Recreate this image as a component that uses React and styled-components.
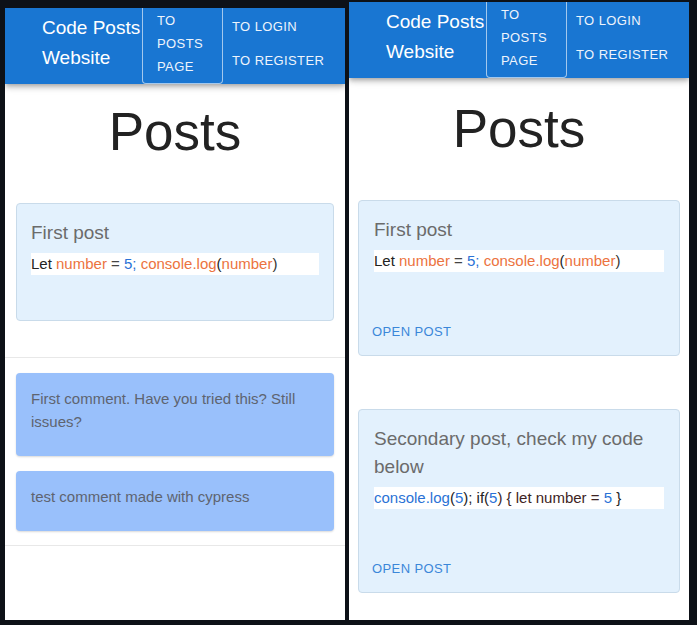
import React from 'react';
import styled, { createGlobalStyle } from 'styled-components';

const GlobalStyle = createGlobalStyle`
  html, body {
    margin: 0;
    padding: 0;
    background-color: #0d1117;
    overflow: hidden;
  }
  body {
    font-family: "Liberation Sans", Arial, sans-serif;
  }
`;

function CodeLine({ parts }) {
  return (
    <Code>
      {parts.map(([text, color], i) => (
        <Token key={i} $color={color}>{text}</Token>
      ))}
    </Code>
  );
}

function Header() {
  return (
    <Bar>
      <Title>Code Posts Website</Title>
      <OutlinedLink>TO POSTS PAGE</OutlinedLink>
      <Links>
        <NavLink>TO LOGIN</NavLink>
        <NavLink>TO REGISTER</NavLink>
      </Links>
    </Bar>
  );
}

const ORANGE = '#ec7340';
const BLUE = '#2a72d6';
const DARK = '#222';
const MAROON = '#3e2424';

const firstCode = [
  ['Let ', DARK],
  ['number', ORANGE],
  [' = ', '#444'],
  ['5; ', BLUE],
  ['console.log', ORANGE],
  ['(', DARK],
  ['number', ORANGE],
  [')', '#333'],
];

const secondCode = [
  ['console.log', BLUE],
  ['(', DARK],
  ['5', BLUE],
  ['); if(', DARK],
  ['5', BLUE],
  [') { let number = ', MAROON],
  ['5', BLUE],
  [' }', DARK],
];

export default function App() {
  return (
    <>
      <GlobalStyle />
      <Screen>
        <Panel $height={612}>
          <Header />
          <Heading $top={21}>Posts</Heading>
          <PostCard $side={11} $pad={14} $top={45} $bottom={45}>
            <PostTitle>First post</PostTitle>
            <CodeLine parts={firstCode} />
          </PostCard>
          <Divider $top={36} />
          <Comments>
            <Comment>First comment. Have you tried this? Still issues?</Comment>
            <Comment>test comment made with cypress</Comment>
          </Comments>
          <Divider $top={0} />
        </Panel>

        <Panel $height={618}>
          <Header />
          <Heading $top={24}>Posts</Heading>
          <PostCard $side={9} $pad={15} $top={45} $bottom={10}>
            <PostTitle>First post</PostTitle>
            <CodeLine parts={firstCode} />
            <Actions>
              <OpenPost>OPEN POST</OpenPost>
            </Actions>
          </PostCard>
          <PostCard $side={9} $pad={15} $top={53} $bottom={10}>
            <PostTitle>Secondary post, check my code below</PostTitle>
            <CodeLine parts={secondCode} />
            <Actions>
              <OpenPost>OPEN POST</OpenPost>
            </Actions>
          </PostCard>
        </Panel>
      </Screen>
    </>
  );
}

const Screen = styled.div`
  display: flex;
  flex-direction: row;
  align-items: flex-end;
  gap: 4px;

  height: 620px;
  padding-left: 5px;
`;

const Panel = styled.div`
  width: 340px;
  height: ${(p) => p.$height}px;
  background-color: white;
  overflow: hidden;

  display: flex;
  flex-direction: column;
`;

const Bar = styled.header`
  flex-shrink: 0;
  height: 76px;
  padding-left: 37px;
  background-color: #1976d2;
  color: #fff;
  box-shadow: 0 2px 4px -1px rgba(0, 0, 0, 0.2), 0 4px 5px 0 rgba(0, 0, 0, 0.14),
    0 1px 10px 0 rgba(0, 0, 0, 0.12);
  position: relative;
  z-index: 1;

  display: flex;
  flex-direction: row;
  align-items: stretch;
`;

const Title = styled.div`
  flex: 0 0 100px;
  align-self: center;
  padding-bottom: 6px;

  font-size: 19px;
  line-height: 30px;
`;

const OutlinedLink = styled.div`
  box-sizing: border-box;
  flex: 0 0 81px;
  padding: 0 12px 5px 14px;

  border: 1px solid rgba(255, 255, 255, 0.6);
  border-top: none;
  border-radius: 0 0 4px 4px;

  display: flex;
  align-items: center;

  font-size: 13px;
  letter-spacing: 0.4px;
  line-height: 23px;
  color: #eef4fc;
`;

const Links = styled.div`
  margin-left: 9px;
  padding-bottom: 5px;

  display: flex;
  flex-direction: column;
  justify-content: center;
`;

const NavLink = styled.div`
  font-size: 13px;
  letter-spacing: 0.4px;
  line-height: 34px;
  white-space: nowrap;
  color: #eef4fc;
`;

const Heading = styled.h1`
  margin: ${(p) => p.$top}px 0 0;
  text-align: center;

  font-size: 53px;
  font-weight: 400;
  line-height: 53px;
  color: #222;
`;

const PostCard = styled.div`
  margin: ${(p) => p.$top}px ${(p) => p.$side}px 0;
  padding: 15px ${(p) => p.$pad}px ${(p) => p.$bottom}px;

  background-color: #e3f1fd;
  border: 1px solid #c9dbea;
  border-radius: 4px;

  display: flex;
  flex-direction: column;
`;

const PostTitle = styled.div`
  font-size: 19px;
  line-height: 28px;
  color: #6b6b6b;
`;

const Code = styled.div`
  margin-top: 6px;
  height: 22px;

  background-color: white;

  font-size: 15px;
  line-height: 22px;
  white-space: nowrap;
`;

const Token = styled.span`
  color: ${(p) => p.$color};
`;

const Actions = styled.div`
  margin: 45px 0 0 -2px;
  height: 28px;

  display: flex;
  align-items: center;
`;

const OpenPost = styled.button`
  padding: 0;
  border: none;
  background: none;

  font-family: "Liberation Sans", Arial, sans-serif;
  font-size: 13px;
  letter-spacing: 0.4px;
  color: #3b87d9;
`;

const Divider = styled.div`
  margin-top: ${(p) => p.$top}px;
  height: 1px;
  background-color: #e8e8e8;
`;

const Comments = styled.div`
  padding: 15px 11px 14px;

  display: flex;
  flex-direction: column;
  gap: 15px;
`;

const Comment = styled.div`
  padding: 14px 15px 23px;

  background-color: #99c0fb;
  border-radius: 4px;
  box-shadow: 0 1px 2px rgba(0, 0, 0, 0.15);

  font-size: 15px;
  line-height: 23px;
  color: #5e6470;
`;
